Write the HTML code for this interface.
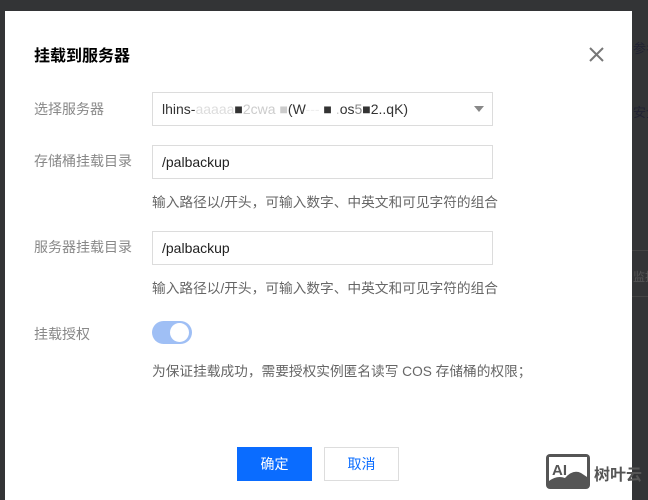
<!DOCTYPE html>
<html><head><meta charset="utf-8"><style>
*{margin:0;padding:0;box-sizing:border-box}
body{width:648px;height:500px;background:#333436;position:relative;overflow:hidden;font-family:"Liberation Sans","Noto Sans CJK SC",sans-serif}
.dlg{position:absolute;left:5px;top:11px;width:627px;height:489px;background:#fff}
.a{position:absolute;white-space:nowrap}
.lbl{font-size:14px;color:#888;left:34px}
.inp{position:absolute;left:152px;width:341px;height:34px;border:1px solid #dcdcdc;font-size:14px;color:#222;padding:8px 0 0 9px}
.hint{font-size:13.7px;color:#666;left:152px}
</style></head><body>
<div class="a" style="left:633px;top:38px;font-size:13px;color:#223;">参考</div>
<div class="a" style="left:633px;top:102px;font-size:13px;color:#223;">安全</div>
<div class="a" style="left:633px;top:268px;font-size:12px;color:#555;">监控</div>
<div style="position:absolute;left:632px;top:250px;width:16px;height:1px;background:#444"></div>
<div style="position:absolute;left:632px;top:296px;width:16px;height:1px;background:#444"></div>
<div class="dlg"></div>
<div class="a" style="left:34px;top:42px;font-size:16px;font-weight:bold;color:#000">挂载到服务器</div>
<svg class="a" style="left:589px;top:47px" width="15" height="15"><path d="M1 1L14 14M14 1L1 14" stroke="#777" stroke-width="2"/></svg>
<div class="a lbl" style="top:99px">选择服务器</div>
<div class="inp" style="top:92px;color:#333">lhins-<span style="color:#ddd">aaaaa</span>■<span style="color:#ccc">2cwa</span> <span style="color:#ccc">■</span>(W<span style="color:#eee">---</span> ■ <span style="color:#ccc">.</span>os<span style="color:#888">5</span>■2..qK)</div>
<svg class="a" style="left:474px;top:106px" width="10" height="7"><path d="M0 0H10L5 6Z" fill="#888"/></svg>
<div class="a lbl" style="top:151px">存储桶挂载目录</div>
<div class="inp" style="top:145px">/palbackup</div>
<div class="a hint" style="top:191px">输入路径以/开头，可输入数字、中英文和可见字符的组合</div>
<div class="a lbl" style="top:237px">服务器挂载目录</div>
<div class="inp" style="top:231px">/palbackup</div>
<div class="a hint" style="top:277px">输入路径以/开头，可输入数字、中英文和可见字符的组合</div>
<div class="a lbl" style="top:324px">挂载授权</div>
<div class="a" style="left:152px;top:321px;width:40px;height:23px;border-radius:12px;background:#9fbff5"></div>
<div class="a" style="left:170px;top:323px;width:19px;height:19px;border-radius:50%;background:#fff"></div>
<div class="a hint" style="top:360px">为保证挂载成功，需要授权实例匿名读写 COS 存储桶的权限；</div>
<div class="a" style="left:237px;top:447px;width:75px;height:34px;background:#0a6cff;color:#fff;font-size:14px;text-align:center;line-height:34px">确定</div>
<div class="a" style="left:324px;top:447px;width:75px;height:34px;border:1px solid #ddd;color:#0a6cff;font-size:14px;text-align:center;line-height:32px">取消</div>
<svg class="a" style="left:545px;top:453px" width="46" height="37"><rect x="1" y="1" width="44" height="35" rx="4" fill="#555"/><rect x="4" y="4" width="38" height="29" fill="#fff"/><path d="M4 33V28Q12 22 20 25Q28 16 36 20L42 24V33Z" fill="#555"/><text x="7" y="22" font-size="15" font-weight="bold" fill="#555" font-family="Liberation Sans">AI</text></svg>
<div class="a" style="left:594px;top:461px;font-size:16px;font-weight:bold;color:#555">树叶云</div>
</body></html>
